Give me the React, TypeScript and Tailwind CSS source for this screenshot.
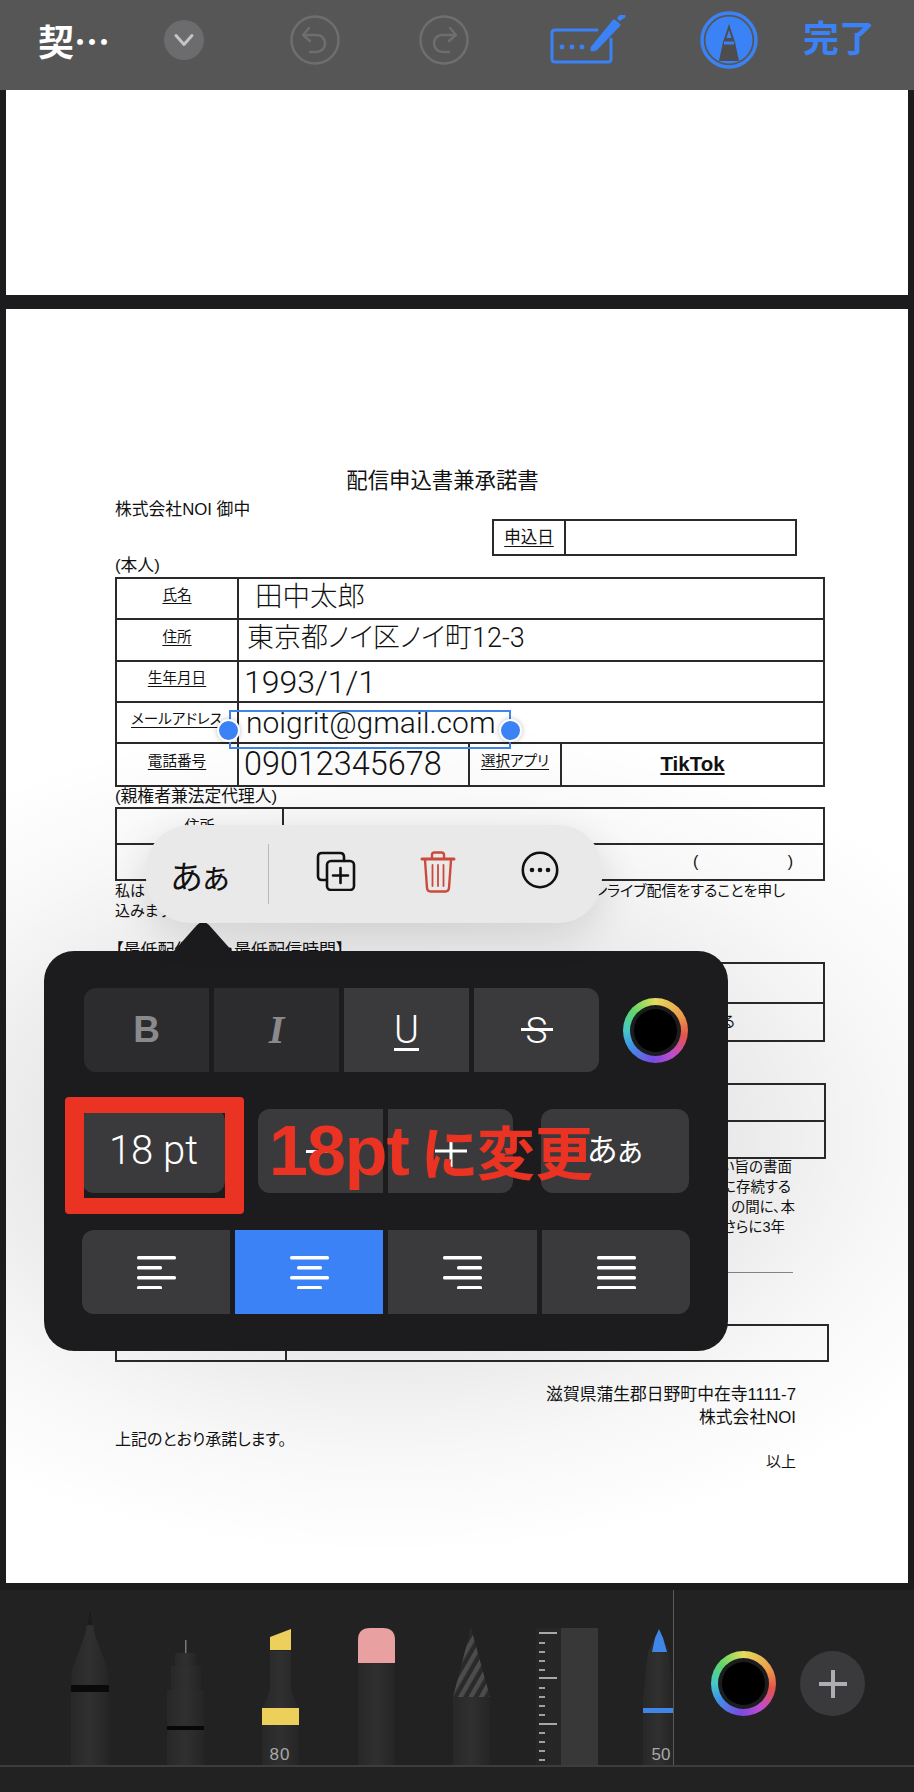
const ringClass =
  'flex items-center justify-center rounded-full bg-[conic-gradient(#e3dc5f_0deg,#ee9c4a_60deg,#e5534b_100deg,#c04bd0_145deg,#7a4be0_185deg,#3f8fe8_235deg,#45c8c8_270deg,#5fd56b_310deg,#a9dc5c_340deg,#e3dc5f_360deg)]'

function ColorRing() {
  return (
    <div className={`h-[65px] w-[65px] ${ringClass}`}>
      <div className="flex h-[51px] w-[51px] items-center justify-center rounded-full bg-[#1c1c1e]">
        <div className="h-[43px] w-[43px] rounded-full bg-black" />
      </div>
    </div>
  )
}

function Header() {
  return (
    <header className="flex h-[90px] items-center bg-[#565656] pb-[11px] text-white">
      <span className="ml-[38px] w-[72px] whitespace-nowrap [font-family:'Noto_Sans_CJK_JP',sans-serif] text-[36px] font-bold leading-none">契…</span>
      <div className="ml-[54px] flex h-[40px] w-[40px] items-center justify-center rounded-full bg-[#6c6c6e]">
        <svg width="22" height="14" viewBox="0 0 22 14" fill="none" stroke="#c4c4c6" strokeWidth="3" strokeLinecap="round" strokeLinejoin="round">
          <path d="M3 2.5 11 11.5 19 2.5" />
        </svg>
      </div>
      <svg className="ml-[86px]" width="50" height="50" viewBox="0 0 50 50" fill="none" stroke="#6e6e6e" strokeWidth="2.5" strokeLinecap="round" strokeLinejoin="round">
        <circle cx="25" cy="25" r="23.5" />
        <path d="M19 13 13 20 20 26" />
        <path d="M14 20H27C32 20 35 24 35 28.5S31.5 37 27 37H20" />
      </svg>
      <svg className="ml-[79px]" width="50" height="50" viewBox="0 0 50 50" fill="none" stroke="#6e6e6e" strokeWidth="2.5" strokeLinecap="round" strokeLinejoin="round">
        <circle cx="25" cy="25" r="23.5" />
        <path d="M31 13 37 20 30 26" />
        <path d="M36 20H23C18 20 15 24 15 28.5S18.5 37 23 37H30" />
      </svg>
      <svg className="ml-[81px]" width="76" height="50" viewBox="0 0 76 50" fill="none" stroke="#3b82f6" strokeWidth="3" strokeLinecap="round" strokeLinejoin="round">
        <path d="M47 15H5Q2 15 2 18V44Q2 47 5 47H58Q61 47 61 44V24" />
        <path d="M42 33 64 6 69 10 46 34 42 35Z" fill="#3b82f6" />
        <path d="M70 3 73 1" strokeWidth="5" />
        <circle cx="12" cy="32" r="2.4" fill="#3b82f6" stroke="none" />
        <circle cx="22" cy="32" r="2.4" fill="#3b82f6" stroke="none" />
        <circle cx="32" cy="32" r="2.4" fill="#3b82f6" stroke="none" />
      </svg>
      <svg className="ml-[74px]" width="58" height="58" viewBox="0 0 58 58">
        <circle cx="29" cy="29" r="27" fill="none" stroke="#3b82f6" strokeWidth="3.5" />
        <circle cx="29" cy="29" r="23.5" fill="#3b82f6" />
        <path d="M29 13 23 31 19 50H39L35 31Z" fill="#4d4d4f" />
        <path d="M26.5 27 29 19 31.5 27Z" fill="#3b82f6" />
        <path d="M24 32H34" stroke="#3b82f6" strokeWidth="3" />
      </svg>
      <span className="ml-[45px] text-[36px] font-bold leading-none text-[#3b82f6]">完了</span>
    </header>
  )
}

function Cell({ children, className = '' }: { children?: React.ReactNode; className?: string }) {
  return <div className={`flex items-center ${className}`}>{children}</div>
}

function Label({ children, className = '' }: { children: React.ReactNode; className?: string }) {
  return <span className={`whitespace-nowrap text-[14.6px] leading-none underline underline-offset-[3px] ${className}`}>{children}</span>
}

function ApplicantTable() {
  const rowClass = 'flex border-b-2 border-[#2a2a2a]'
  const labelClass = 'w-[122px] shrink-0 justify-center border-r-2 border-[#2a2a2a] pb-[6px]'
  const valueClass = "[font-family:'Roboto','Noto_Sans_CJK_JP',sans-serif] font-light leading-none"
  return (
    <div className="border-x-2 border-t-2 border-[#2a2a2a]">
      <div className={`${rowClass} h-[41px]`}>
        <Cell className={labelClass}><Label>氏名</Label></Cell>
        <Cell className={`pb-[4px] pl-[16px] text-[27.5px] ${valueClass}`}>田中太郎</Cell>
      </div>
      <div className={`${rowClass} h-[42px]`}>
        <Cell className={labelClass}><Label>住所</Label></Cell>
        <Cell className={`pb-[4px] pl-[8px] text-[27px] ${valueClass}`}>東京都ノイ区ノイ町12-3</Cell>
      </div>
      <div className={`${rowClass} h-[41px]`}>
        <Cell className={labelClass}><Label>生年月日</Label></Cell>
        <Cell className={`pl-[5px] text-[32px] ${valueClass}`}>1993/1/1</Cell>
      </div>
      <div className={`${rowClass} h-[41px]`}>
        <Cell className={labelClass}><Label>メールアドレス</Label></Cell>
        <Cell className={`pl-[7px] text-[30px] ${valueClass}`}>noigrit@gmail.com</Cell>
      </div>
      <div className={`${rowClass} h-[43px]`}>
        <Cell className={labelClass}><Label>電話番号</Label></Cell>
        <Cell className={`w-[231px] border-r-2 border-[#2a2a2a] pl-[5px] text-[32.4px] ${valueClass}`}>09012345678</Cell>
        <Cell className="w-[92px] justify-center border-r-2 border-[#2a2a2a] pb-[6px]"><Label>選択アプリ</Label></Cell>
        <Cell className="flex-1 justify-center text-[20.5px] font-bold underline underline-offset-[2px]">TikTok</Cell>
      </div>
    </div>
  )
}

function Document() {
  return (
    <div className="pl-[109px] pr-[83px] pt-[160px] text-[14px] text-[#111]">
      <div className="flex h-[26px] items-center justify-center pr-[55px] text-[21.4px] leading-none">配信申込書兼承諾書</div>
      <div className="flex h-[24px] items-end text-[16.8px] leading-none">株式会社NOI 御中</div>
      <div className="flex h-[37px] justify-end pr-[28px]">
        <div className="flex w-[305px] border-2 border-[#2a2a2a]">
          <Cell className="w-[72px] justify-center border-r-2 border-[#2a2a2a]"><Label className="text-[16.5px]">申込日</Label></Cell>
        </div>
      </div>
      <div className="flex h-[21px] items-center text-[16.8px] leading-none">(本人)</div>
      <ApplicantTable />
      <div className="flex h-[20px] items-center text-[16.8px] leading-none">(親権者兼法定代理人)</div>

      <div className="border-x-2 border-t-2 border-[#2a2a2a]">
        <div className="flex h-[36px] border-b-2 border-[#2a2a2a]">
          <Cell className="w-[167px] items-start justify-center border-r-2 border-[#2a2a2a] pt-[9px]"><span className="text-[15px] leading-none">住所</span></Cell>
        </div>
        <div className="flex h-[36px] justify-end border-b-2 border-[#2a2a2a] pr-[30px]">
          <Cell className="w-[100px] justify-between text-[16px]"><span>(</span><span>)</span></Cell>
        </div>
      </div>
      <div className="flex h-[18px] items-center justify-between pr-[40px] text-[15px] leading-none">
        <span>私は</span>
        <span>オンライブ配信をすることを申し</span>
      </div>
      <div className="flex h-[22px] items-center text-[15px] leading-none">込みます</div>
      <div className="mt-[19px] flex h-[20px] items-center text-[17px] leading-none">【最低配信日数・最低配信時間】</div>
      <div className="mt-[2px] border-x-2 border-t-2 border-[#2a2a2a]">
        <div className="h-[40px] border-b-2 border-[#2a2a2a]" />
        <div className="flex h-[38px] items-center justify-end border-b-2 border-[#2a2a2a] pr-[88px] text-[15px]">する</div>
      </div>

      <div className="mr-[-1px] mt-[41px] border-x-2 border-t-2 border-[#2a2a2a]">
        <div className="h-[37px] border-b-2 border-[#2a2a2a]" />
        <div className="h-[37px] border-b-2 border-[#2a2a2a]" />
      </div>
      <div className="mt-[-2px] text-[14.5px] leading-none">
        <p className="flex h-[20px] items-center justify-end pr-[33px]">ない旨の書面</p>
        <p className="flex h-[20px] items-center justify-end pr-[34px]">に存続する</p>
        <p className="flex h-[20px] items-center justify-end pr-[30px]">の間に、本</p>
        <p className="flex h-[20px] items-center justify-end pr-[40px]">さらに3年</p>
      </div>
      <div className="ml-auto mr-[32px] mt-[35px] h-[1px] w-[300px] bg-[#8a8a8a]" />
      <div className="mr-[-4px] mt-[51px] flex h-[38px] border-2 border-[#2a2a2a]">
        <Cell className="w-[170px] justify-center border-r-2 border-[#2a2a2a] pb-[6px]"><Label>電話番号</Label></Cell>
        <Cell className="pb-[2px] pl-[20px] text-[13px] text-[#888]">09012345678</Cell>
      </div>
      <div className="mt-[22px] text-[16.8px] leading-none">
        <p className="flex h-[23px] items-center justify-end pr-[29px]">滋賀県蒲生郡日野町中在寺1111-7</p>
        <p className="flex h-[22px] items-center justify-end pr-[29px]">株式会社NOI</p>
        <p className="flex h-[21px] items-center text-[16px]">上記のとおり承諾します。</p>
        <p className="flex h-[22px] items-center justify-end pr-[29px] text-[15px]">以上</p>
      </div>
    </div>
  )
}

function Selection() {
  const handle = 'absolute top-[7px] h-[23px] w-[23px] rounded-full border-[2px] border-white bg-[#3b82f6] shadow-[0_0_5px_rgba(0,0,0,0.25)]'
  return (
    <div className="absolute left-[223px] top-[401px] h-[39px] w-[282px] border-2 border-[#3f86e8]">
      <div className={`${handle} left-[-14px]`} />
      <div className={`${handle} right-[-13px]`} />
    </div>
  )
}

function ContextMenu() {
  return (
    <div className="absolute left-[140px] top-[516px] flex h-[98px] w-[456px] items-center rounded-[44px] bg-[#e9e9ea] shadow-[0_10px_40px_rgba(0,0,0,0.12)]">
      <span className="flex w-[108px] justify-center pt-[6px] text-[33px] leading-none text-[#111]">あぁ</span>
      <div className="ml-[14px] h-[60px] w-[1px] bg-[#b9b9bb]" />
      <div className="ml-[16px] flex pb-[4px]">
        <div className="flex w-[102px] justify-center">
          <svg width="40" height="40" viewBox="0 0 40 40" fill="none" stroke="#111" strokeWidth="2.6" strokeLinecap="round" strokeLinejoin="round">
            <path d="M10 29H6Q2 29 2 25V6Q2 2 6 2H24Q28 2 28 6V10" />
            <rect x="11" y="10" width="27" height="29" rx="4" />
            <path d="M24.5 17V32M17 24.5H32" />
          </svg>
        </div>
        <div className="flex w-[102px] justify-center">
          <svg width="36" height="42" viewBox="0 0 36 42" fill="none" stroke="#cb4a3d" strokeWidth="2.4" strokeLinecap="round" strokeLinejoin="round">
            <path d="M2 8H34" strokeWidth="3" />
            <path d="M12 7V4Q12 1.5 14.5 1.5H21.5Q24 1.5 24 4V7" />
            <path d="M5 9 7 37Q7.3 40.5 10.5 40.5H25.5Q28.7 40.5 29 37L31 9" />
            <path d="M12.5 14V35M18 14V35M23.5 14V35" strokeWidth="1.8" />
          </svg>
        </div>
        <div className="flex w-[102px] justify-center">
          <svg width="38" height="38" viewBox="0 0 38 38" fill="none">
            <circle cx="19" cy="19" r="17.2" stroke="#111" strokeWidth="2.6" />
            <circle cx="11" cy="19" r="2.3" fill="#111" />
            <circle cx="19" cy="19" r="2.3" fill="#111" />
            <circle cx="27" cy="19" r="2.3" fill="#111" />
          </svg>
        </div>
      </div>
    </div>
  )
}

function AlignIcon({ widths, align }: { widths: number[]; align: 'left' | 'center' | 'right' }) {
  return (
    <svg width="39" height="34" viewBox="0 0 39 34" fill="#fff">
      {widths.map((w, i) => (
        <rect
          key={i}
          x={align === 'left' ? 0 : align === 'center' ? (39 - w) / 2 : 39 - w}
          y={1 + i * 10}
          width={w}
          height="3.4"
          rx="1.5"
        />
      ))}
    </svg>
  )
}

function FormatPanel() {
  const btn = 'flex h-[84px] items-center justify-center bg-[#3a3a3c]'
  return (
    <div className="absolute left-[38px] top-[642px] h-[400px] w-[684px] rounded-[30px] bg-[#1c1c1e] pl-[38px] pt-[37px]">
      <svg className="absolute left-[129px] top-[-30px]" width="60" height="31" viewBox="0 0 60 31" fill="#1c1c1e">
        <path d="M0 31 24 4Q30 -2 36 4L60 31Z" />
      </svg>

      <div className="flex items-center">
        <div className="ml-[2px] flex gap-[5px] text-white">
          <div className={`${btn} w-[125px] rounded-l-[12px] !bg-[#2c2c2e] text-[37px] font-bold text-[#8a8a8c]`}>B</div>
          <div className={`${btn} w-[125px] !bg-[#2c2c2e] [font-family:'Liberation_Serif',serif] text-[40px] font-bold italic text-[#8a8a8c]`}>I</div>
          <div className={`${btn} w-[125px] text-[38px] leading-none font-light`}>
            <span className="underline decoration-[2.5px] underline-offset-[5px] [font-family:'Roboto',sans-serif]">U</span>
          </div>
          <div className={`${btn} relative w-[125px] rounded-r-[12px] [font-family:'Roboto',sans-serif] text-[37px] font-light leading-none`}>
            S
            <div className="absolute left-[47px] top-[40px] h-[2.5px] w-[32px] bg-white" />
          </div>
        </div>
        <div className="ml-[24px]"><ColorRing /></div>
      </div>

      <div className="mt-[37px] flex text-white">
        <div className={`${btn} w-[143px] rounded-[12px] [font-family:'Roboto',sans-serif] text-[40px] font-light leading-none`}>18 pt</div>
        <div className={`${btn} ml-[33px] w-[125px] rounded-l-[12px]`}><div className="h-[3px] w-[30px] bg-white" /></div>
        <div className={`${btn} ml-[5px] w-[125px] rounded-r-[12px]`}>
          <svg width="32" height="32" viewBox="0 0 32 32" stroke="#fff" strokeWidth="3"><path d="M0 16H32M16 0V32" /></svg>
        </div>
        <div className={`${btn} ml-[28px] w-[148px] rounded-[12px] text-[31px]`}>あぁ</div>
      </div>

      <div className="mt-[37px] flex gap-[5px]">
        <div className={`${btn} w-[148px] rounded-l-[12px]`}><AlignIcon widths={[39, 25, 39, 25]} align="left" /></div>
        <div className={`${btn} w-[148px] !bg-[#3b82f6]`}><AlignIcon widths={[39, 25, 39, 25]} align="center" /></div>
        <div className={`${btn} w-[149px]`}><AlignIcon widths={[39, 25, 39, 25]} align="right" /></div>
        <div className={`${btn} w-[148px] rounded-r-[12px]`}><AlignIcon widths={[39, 39, 39, 39]} align="left" /></div>
      </div>

      {/* tutorial annotation drawn over the panel */}
      <div className="absolute left-[21px] top-[146px] h-[117px] w-[179px] rounded-[4px] border-x-[19px] border-b-[16px] border-t-[16px] border-[#ea3323]" />
      <div className="absolute left-[225px] top-[165px] flex items-baseline whitespace-nowrap font-bold leading-none text-[#ea3323]">
        <span className="text-[70px] tracking-[-1px]">18pt</span>
        <span className="ml-[12px] text-[58px]">に変更</span>
      </div>
    </div>
  )
}

function ToolTray() {
  const body = 'url(#toolBody)'
  const shortTicks = [52, 61, 70, 79, 97, 106, 115, 124, 142, 151, 160, 169]
  return (
    <svg width="673" height="175" viewBox="0 0 673 175" fontFamily="'Liberation Sans', sans-serif">
      <defs>
        <linearGradient id="toolBody" x1="0" x2="1" y1="0" y2="0">
          <stop offset="0" stopColor="#282828" />
          <stop offset="0.5" stopColor="#303030" />
          <stop offset="1" stopColor="#252525" />
        </linearGradient>
        <pattern id="pencilStripe" width="9" height="9" patternUnits="userSpaceOnUse" patternTransform="rotate(30)">
          <rect width="9" height="9" fill="#2a2a2a" />
          <rect width="4.5" height="9" fill="#4c4c4c" />
        </pattern>
      </defs>

      {/* pen */}
      <path d="M90 17 85 45 72 80 71 95V175H109V95L108 80 95 45Z" fill={body} />
      <path d="M90 17 87 35H93Z" fill="#1c1c1c" />
      <rect x="71" y="95" width="38" height="7" fill="#0a0a0a" />

      {/* fineliner */}
      <rect x="185" y="50" width="1.5" height="14" fill="#777" />
      <rect x="175" y="63" width="21" height="14" rx="2" fill={body} />
      <rect x="171" y="76" width="30" height="24" fill={body} />
      <rect x="167" y="100" width="37" height="75" fill={body} />
      <rect x="167" y="136" width="37" height="4" fill="#070707" />

      {/* highlighter */}
      <path d="M270 47 291 39V60H270Z" fill="#edd05c" />
      <path d="M270 61H291V95Q291 105 299 118V175H262V118Q270 105 270 95Z" fill={body} />
      <rect x="262" y="118" width="37" height="17" fill="#edd05c" />
      <text x="280" y="170" fontSize="17" letterSpacing="1" fill="#a8a8a8" textAnchor="middle">80</text>

      {/* eraser */}
      <path d="M358 73V50Q358 38 370 38H383Q395 38 395 50V73Z" fill="#e9a0a0" />
      <rect x="358" y="73" width="37" height="102" fill={body} />

      {/* pencil */}
      <path d="M471 38 490 107H453Z" fill="url(#pencilStripe)" />
      <rect x="453" y="107" width="37" height="68" fill={body} />

      {/* ruler */}
      <rect x="536" y="38" width="25" height="137" fill="#262626" />
      <rect x="561" y="38" width="37" height="137" fill="#383838" />
      {[42, 87, 133].map((y) => <rect key={y} x="539" y={y} width="18" height="2" fill="#a8a8a8" />)}
      {shortTicks.map((y) => <rect key={y} x="539" y={y} width="6" height="2" fill="#a0a0a0" />)}

      {/* brush pen, cut off by the tray edge */}
      <path d="M659 39 664 50 669 62 673 100V175H643V110L648 62 654 50Z" fill={body} />
      <path d="M659 39 663 48 667 62H652L655 48Z" fill="#3f86e8" />
      <rect x="643" y="118" width="30" height="5" fill="#3f86e8" />
      <text x="661" y="170" fontSize="17" fill="#a8a8a8" textAnchor="middle">50</text>
    </svg>
  )
}

function BottomBar() {
  return (
    <footer className="absolute inset-x-0 top-[1590px] h-[202px] bg-[#222]">
      <div className="flex h-[175px]">
        <ToolTray />
        <div className="w-[1px] bg-[#5a5a5a]" />
        <div className="ml-[37px] flex items-center gap-[24px] pt-[12px]">
          <ColorRing />
          <div className="flex h-[65px] w-[65px] items-center justify-center rounded-full bg-[#3a3a3c]">
            <svg width="28" height="28" viewBox="0 0 28 28" stroke="#aeaeb2" strokeWidth="4"><path d="M14 0V28M0 14H28" /></svg>
          </div>
        </div>
      </div>
      <div className="h-[2px] bg-[#3d3d3d]" />
    </footer>
  )
}

export default function App() {
  return (
    <div className="relative h-[1792px] w-[914px] overflow-hidden bg-[#1c1c1e] [font-family:'Liberation_Sans','Noto_Sans_CJK_JP',sans-serif] [font-feature-settings:'palt']">
      <Header />
      <div className="mx-[6px] h-[205px] bg-white" />
      <div className="relative mx-[6px] mt-[14px] h-[1274px] overflow-hidden bg-white">
        <Document />
        <Selection />
        {/* soft dimming the popover casts over the page */}
        <div className="pointer-events-none absolute inset-0 bg-[radial-gradient(ellipse_680px_420px_at_380px_827px,rgba(0,0,0,0.11)_0%,rgba(0,0,0,0.085)_50%,rgba(0,0,0,0.03)_75%,transparent_100%)]" />
        <FormatPanel />
        <ContextMenu />
      </div>
      <BottomBar />
    </div>
  )
}
